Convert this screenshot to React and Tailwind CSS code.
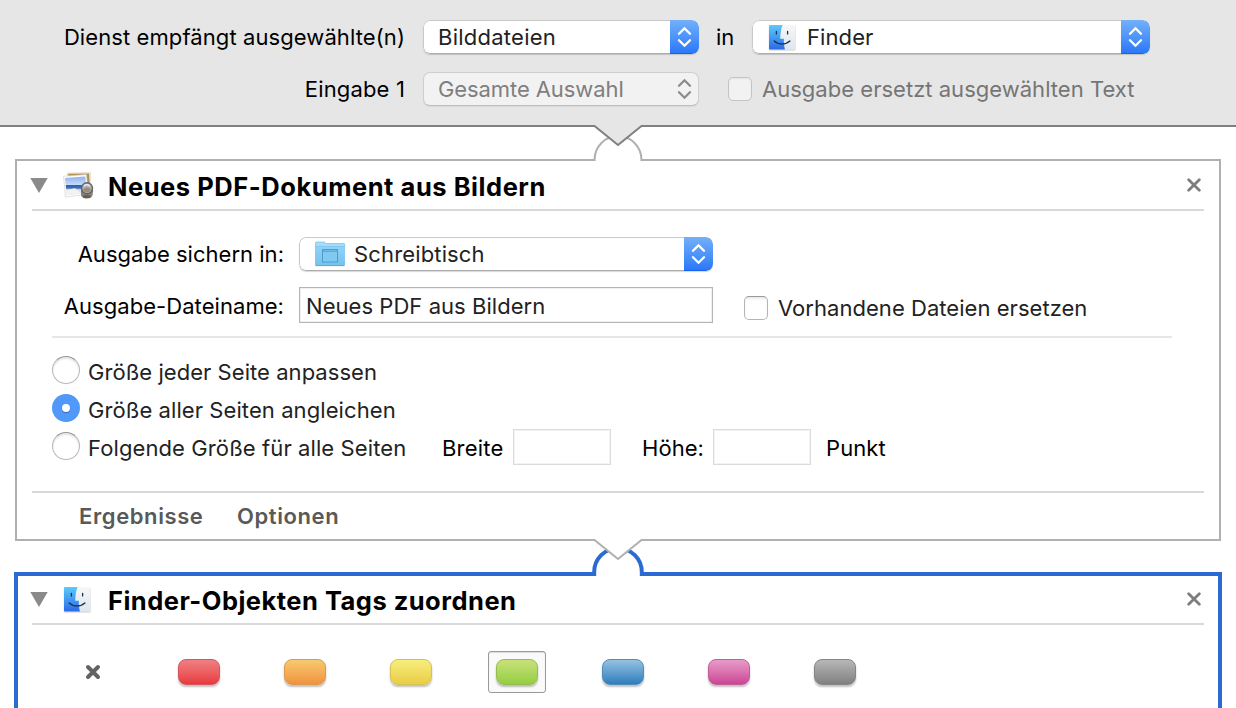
import React from "react";

function FinderIcon({ id }) {
  return (
    <svg width="30" height="28" viewBox="0 0 30 28" className="block shrink-0">
      <defs>
        <linearGradient id={id + "-l"} x1="0" y1="0" x2="0" y2="1">
          <stop offset="0" stopColor="#5ccbfb" />
          <stop offset="1" stopColor="#2a6ae8" />
        </linearGradient>
        <linearGradient id={id + "-r"} x1="0" y1="0" x2="0" y2="1">
          <stop offset="0" stopColor="#f7f7f8" />
          <stop offset="1" stopColor="#dde6f0" />
        </linearGradient>
      </defs>
      <rect x="1.700" y="2" width="27" height="24.800" rx="1.500" fill="#000" opacity="0.14" />
      <rect x="2" y="1" width="26.300" height="24.600" rx="1.200" fill={"url(#" + id + "-r)"} />
      <path
        d="M3 1H15.600C14 5 13.400 9.500 13.200 14.800H16.800C16.700 18.500 17.100 22 17.900 25.600H3Q2 25.600 2 24.600V2Q2 1 3 1Z"
        fill={"url(#" + id + "-l)"}
      />
      <path d="M9.400 7.300V9.900M20.600 7.300V9.900" stroke="#1c2f4a" strokeWidth="1.300" strokeLinecap="round" />
      <path d="M7.200 17C11 20.900 19 20.900 22.900 17" fill="none" stroke="#1c2f4a" strokeWidth="1.300" strokeLinecap="round" />
    </svg>
  );
}

function PreviewIcon() {
  return (
    <svg width="32" height="30" viewBox="0 0 32 30" className="block shrink-0">
      <defs>
        <linearGradient id="pv-sky" x1="0" y1="0" x2="0" y2="1">
          <stop offset="0" stopColor="#8db2ee" />
          <stop offset="0.44" stopColor="#c4dbfa" />
          <stop offset="0.48" stopColor="#2f62ad" />
          <stop offset="0.62" stopColor="#3e70b8" />
          <stop offset="0.72" stopColor="#e3eaf3" />
          <stop offset="1" stopColor="#c3cfdd" />
        </linearGradient>
      </defs>
      <path d="M4 2L27.400 1.400L28 19L6 20Z" fill="#f3efe4" stroke="#d6d0c2" strokeWidth="0.500" />
      <path d="M5 2.800L26.200 2.400L26.800 17L7 18Z" fill="#b0904f" />
      <path d="M0.600 5.200L23.400 3.600L25.400 23L2.400 26.200Z" fill="#fcfcfc" stroke="#cfcfcf" strokeWidth="0.600" />
      <path d="M2 6.900L22.200 5.400L24 21.200L3.800 24.200Z" fill="url(#pv-sky)" />
      <path d="M3.500 19L12 17.200L18 22.200L3.800 24.200Z" fill="#f4f2ee" />
      <path d="M18 19H30.200L29.600 24Q28.500 27.400 24 27.600Q19.600 27.600 18 24.500Z" fill="#8b8075" />
      <ellipse cx="23.800" cy="25.400" rx="4.200" ry="1.500" fill="#665c53" />
      <circle cx="24" cy="17.300" r="5.500" fill="#a9b4c4" stroke="#66625e" strokeWidth="1.400" />
      <path d="M19.800 18.500Q23 15 28 18L26.600 20.600Q23.800 22.400 21 20.600Z" fill="#a08a70" />
      <path d="M20.800 15Q23.800 12.400 27 15" fill="none" stroke="#eef2f7" strokeWidth="1.200" />
    </svg>
  );
}

function FolderIcon() {
  return (
    <svg width="32" height="26" viewBox="0 0 32 26" className="block shrink-0">
      <defs>
        <linearGradient id="fd" x1="0" y1="0" x2="0" y2="1">
          <stop offset="0" stopColor="#90d3f8" />
          <stop offset="1" stopColor="#74c2ee" />
        </linearGradient>
      </defs>
      <path d="M1.500 1.500Q1.500 1 2 1H10Q10.800 1 11.300 1.700L12 2.500H30Q30.700 2.500 30.700 3.200V8H1.500Z" fill="#a4dcfb" stroke="#6cb9e2" strokeWidth="0.600" />
      <path d="M1 5.500H31V23.600Q31 24.400 30.200 24.400H1.800Q1 24.400 1 23.600Z" fill="url(#fd)" />
      <path d="M1 5.500H31" stroke="#7cc3ec" strokeWidth="0.800" />
      <path d="M1.500 24.600H30.500" stroke="#5a9dc4" strokeWidth="0.900" />
      <rect x="8.500" y="8.500" width="15" height="12.500" fill="#80c9f2" stroke="#4c9ccd" strokeWidth="1" />
      <path d="M8.500 10.200H23.500" stroke="#4c9ccd" strokeWidth="1" />
    </svg>
  );
}

function Chevrons({ className }) {
  return (
    <svg width="15" height="22" viewBox="0 0 15 22" className={className} fill="none" stroke="currentColor" strokeWidth="2.300" strokeLinecap="round" strokeLinejoin="miter">
      <path d="M2 7.800L7.500 2.300L13 7.800M2 14.200L7.500 19.700L13 14.200" />
    </svg>
  );
}

function Select({ width, children }) {
  return (
    <div className={"flex h-[34px] shrink-0 items-stretch overflow-hidden rounded-[7px] bg-white shadow-[0_1px_1px_rgba(0,0,0,0.16)] " + width}>
      <div className="flex min-w-0 flex-1 items-center rounded-l-[7px] border border-r-0 border-[#c9c9c9] border-b-[#adadad] pl-[14px] text-[#222]">
        {children}
      </div>
      <div className="flex w-[29px] items-center justify-center rounded-r-[7px] border-b border-[#1763f0] bg-linear-to-b from-[#73b0f9] to-[#2b78f8] text-white">
        <Chevrons className="block" />
      </div>
    </div>
  );
}

function CloseIcon() {
  return (
    <svg width="14" height="14" viewBox="0 0 14 14" className="block" stroke="#7d7d7d" strokeWidth="2.800" strokeLinecap="round">
      <path d="M1.700 1.700L12.300 12.300M12.300 1.700L1.700 12.300" />
    </svg>
  );
}

function Disclosure() {
  return (
    <svg width="18" height="15" viewBox="0 0 18 15" className="block">
      <path d="M0.300 0H17.700L9 15Z" fill="#8a8a8a" />
    </svg>
  );
}

function Radio({ checked }) {
  return checked ? (
    <span className="flex size-7 shrink-0 items-center justify-center rounded-full bg-[#5099f8]">
      <span className="size-2 rounded-full bg-white shadow-[0_1px_1px_rgba(0,0,80,0.35)]" />
    </span>
  ) : (
    <span className="size-7 shrink-0 rounded-full border border-[#b8b8b8] border-t-[#959595] bg-white shadow-[inset_0_2px_2px_rgba(0,0,0,0.1)]" />
  );
}

const TAGS = [
  { name: "red", color: "from-[#ef7f83] to-[#e8373d] border-[#d5565b]" },
  { name: "orange", color: "from-[#f7ca6f] to-[#f0923f] border-[#dc9a4c]" },
  { name: "yellow", color: "from-[#f7ee7c] to-[#e9cd45] border-[#d6c153]" },
  { name: "green", color: "from-[#c8e279] to-[#94cd41] border-[#94bd50]", selected: true },
  { name: "blue", color: "from-[#93c3e1] to-[#2e7dbd] border-[#4f8dba]" },
  { name: "pink", color: "from-[#e79bc9] to-[#cc4495] border-[#bf5e99]" },
  { name: "gray", color: "from-[#b8b8b8] to-[#808080] border-[#858585]" },
];

export default function App() {
  return (
    <div className="flex h-[708px] w-[1236px] flex-col overflow-hidden bg-white font-['Inter','Liberation_Sans',sans-serif] text-[22px] leading-none whitespace-nowrap text-black">
      <header className="relative z-10 h-[127px] shrink-0 border-b-2 border-[#808080] bg-[#e6e6e6] pt-5">
        <div className="flex h-[34px] items-center">
          <div className="flex w-[405px] justify-end tracking-[0.09px]">Dienst empfängt ausgewählte(n)</div>
          <div className="ml-[18px] flex">
            <Select width="w-[276px]">
              <span className="tracking-[0.25px]">Bilddateien</span>
            </Select>
          </div>
          <div className="w-[53px] pl-[17px]">in</div>
          <Select width="w-[398px]">
            <div className="pt-[2px]">
              <FinderIcon id="finder-a" />
            </div>
            <span className="ml-[10px] tracking-[0.09px]">Finder</span>
          </Select>
        </div>
        <div className="mt-[18px] flex h-[34px] items-center">
          <div className="flex w-[405px] justify-end tracking-[0.15px]">Eingabe 1</div>
          <div className="ml-[18px] flex h-[34px] w-[276px] items-center justify-between rounded-[7px] border border-[#cfcfcf] border-b-[#bfbfbf] bg-[#f2f2f2] pr-[6px] pl-[14px] text-[#7f7f7f] shadow-[0_1px_1px_rgba(0,0,0,0.06)]">
            <span className="tracking-[-0.09px]">Gesamte Auswahl</span>
            <Chevrons className="block text-[#8c8c8c]" />
          </div>
          <span className="ml-[29px] size-6 rounded-[5px] border border-[#c4c4c4] bg-[#f2f2f2] shadow-[inset_0_1px_2px_rgba(0,0,0,0.06)]" />
          <span className="ml-[10px] tracking-[0.02px] text-[#757575]">Ausgabe ersetzt ausgewählten Text</span>
        </div>
        <svg width="52" height="24" viewBox="0 0 52 24" className="absolute top-[124px] left-[592px]">
          <path d="M1 0V1L2.500 2L26 21L49.500 2L51 1V0Z" fill="#e6e6e6" />
          <path d="M0 2H2.500L26 21L49.500 2H52" fill="none" stroke="#808080" strokeWidth="2" />
        </svg>
      </header>

      <section className="relative mx-[15px] mt-8 h-[382px] shrink-0 border-2 border-[#b0b0b0] bg-white">
        <svg width="52" height="28" viewBox="0 0 52 28" className="absolute -top-[27px] left-[575px]">
          <path d="M3 25A23 23 0 0 1 49 25V28H3Z" fill="#fff" />
          <path d="M2.600 27V25.500A23.400 23.400 0 0 1 49.400 25.500V27" fill="none" stroke="#b0b0b0" strokeWidth="2" />
        </svg>
        <div className="mx-[15px] flex h-[50px] items-center border-b-2 border-[#d9d9d9]">
          <div className="-ml-[2px] pt-[1px]">
            <Disclosure />
          </div>
          <div className="ml-[15px] pt-[2px]">
            <PreviewIcon />
          </div>
          <h2 className="ml-[13px] flex-1 pt-[4px] text-[25.5px] font-bold tracking-[0.54px]">Neues PDF-Dokument aus Bildern</h2>
          <div className="mr-[3px]">
            <CloseIcon />
          </div>
        </div>

        <div className="mt-[26px] flex h-[34px] items-center">
          <div className="flex w-[267px] justify-end tracking-[0.02px]">Ausgabe sichern in:</div>
          <div className="ml-[15px] flex">
            <Select width="w-[414px]">
              <FolderIcon />
              <span className="ml-[8px] tracking-[0.15px]">Schreibtisch</span>
            </Select>
          </div>
        </div>
        <div className="mt-4 flex h-9 items-center">
          <div className="flex w-[267px] justify-end pt-[1px] tracking-[0.06px]">Ausgabe-Dateiname:</div>
          <div className="ml-[15px] flex h-9 w-[414px] items-center border border-[#b5b5b5] bg-white pt-[1px] pl-[6px] tracking-[0.05px] text-[#222] shadow-[inset_0_0_0_1px_#efefef]">
            Neues PDF aus Bildern
          </div>
          <span className="mt-[6px] ml-[31px] size-6 rounded-[5px] border border-[#b5b5b5] border-t-[#999] bg-white shadow-[inset_0_2px_2px_rgba(0,0,0,0.08)]" />
          <span className="mt-[6px] ml-[10px] tracking-[0.04px] text-[#222]">Vorhandene Dateien ersetzen</span>
        </div>
        <div className="mt-[13px] mr-[47px] ml-[35px] h-[2px] bg-[#e6e6e6]" />

        <div className="mt-[14px] ml-[35px] flex flex-col text-[#222]">
          <div className="flex h-[38px] items-center">
            <span className="-mt-[2px] flex"><Radio /></span>
            <span className="ml-[8px] pt-[2px] tracking-[0.05px]">Größe jeder Seite anpassen</span>
          </div>
          <div className="flex h-[38px] items-center">
            <span className="-mt-[2px] flex"><Radio checked /></span>
            <span className="ml-[8px] pt-[2px] tracking-[0.08px]">Größe aller Seiten angleichen</span>
          </div>
          <div className="flex h-[38px] items-center">
            <span className="-mt-[2px] flex"><Radio /></span>
            <span className="ml-[8px] w-[354px] pt-[2px] tracking-[0.1px]">Folgende Größe für alle Seiten</span>
            <span className="w-[71px] pt-[2px] tracking-[0.2px] text-black">Breite</span>
            <span className="h-9 w-[98px] border border-[#dcdcdc] bg-white shadow-[inset_0_0_0_1px_#f3f3f3]" />
            <span className="ml-[31px] w-[71px] pt-[2px] tracking-[0.05px] text-black">Höhe:</span>
            <span className="h-9 w-[98px] border border-[#dcdcdc] bg-white shadow-[inset_0_0_0_1px_#f3f3f3]" />
            <span className="ml-[15px] pt-[2px] tracking-[0.1px] text-black">Punkt</span>
          </div>
        </div>

        <div className="mx-[15px] mt-[25px] flex h-[47px] items-center border-t-2 border-[#d9d9d9] pl-[47px] font-semibold text-[#595959]">
          <span className="w-[158px] tracking-[0.6px]">Ergebnisse</span>
          <span className="tracking-[0.6px]">Optionen</span>
        </div>
        <svg width="52" height="24" viewBox="0 0 52 24" className="absolute -bottom-[23px] left-[575px] z-20">
          <path d="M1 0V2H2.500L26 21L49.500 2H51V0Z" fill="#fff" />
          <path d="M0 2H2.500L26 21L49.500 2H52" fill="none" stroke="#b0b0b0" strokeWidth="2" />
        </svg>
      </section>

      <section className="relative mx-[14px] mt-[31px] h-[160px] shrink-0 border-4 border-[#2b6ad3] bg-white">
        <svg width="56" height="32" viewBox="0 0 56 32" className="absolute -top-[32px] left-[572px]">
          <path d="M5 27A23 23 0 0 1 51 27V32H5Z" fill="#fff" />
          <path d="M4.200 32V28A23.800 23.800 0 0 1 51.800 28V32" fill="none" stroke="#2b6ad3" strokeWidth="4" />
        </svg>
        <div className="mx-[14px] flex h-[49px] items-center border-b-2 border-[#d9d9d9]">
          <div className="-ml-[2px]">
            <Disclosure />
          </div>
          <div className="ml-[14px]">
            <FinderIcon id="finder-b" />
          </div>
          <h2 className="ml-[16px] flex-1 pt-[3px] text-[25.5px] font-bold tracking-[0.48px]">Finder-Objekten Tags zuordnen</h2>
          <div className="mr-[3px] pb-[1px]">
            <CloseIcon />
          </div>
        </div>
        <div className="mt-[26px] ml-[22px] flex h-[42px] items-center">
          <div className="flex w-[106px] justify-center">
            <svg width="16" height="16" viewBox="0 0 16 16" className="block" stroke="#636363" strokeWidth="4" strokeLinecap="round">
              <path d="M3 3L13 13M13 3L3 13" />
            </svg>
          </div>
          {TAGS.map((tag) => (
            <div key={tag.name} className="flex w-[106px] justify-center">
              <div
                className={
                  "flex h-[42px] w-[58px] items-center justify-center rounded-[3px] border " +
                  (tag.selected ? "border-[#999] bg-[#fafafa] shadow-[inset_0_1px_1px_rgba(0,0,0,0.12)]" : "border-transparent")
                }
              >
                <span className={"h-[26px] w-[42px] rounded-[8px] border bg-linear-to-b shadow-[0_2px_2px_rgba(0,0,0,0.25)] " + tag.color} />
              </div>
            </div>
          ))}
        </div>
      </section>
    </div>
  );
}
